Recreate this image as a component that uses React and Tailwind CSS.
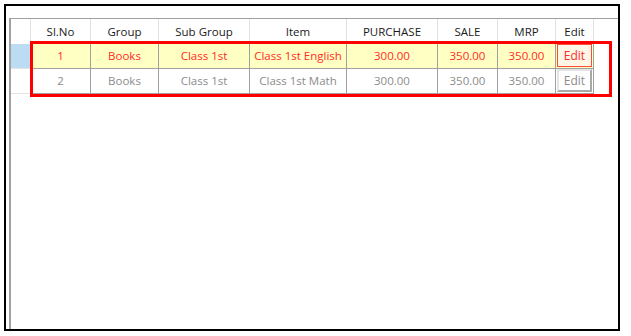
const cols = [
  { key: "sl", label: "Sl.No", w: 60 },
  { key: "group", label: "Group", w: 68 },
  { key: "sub", label: "Sub Group", w: 91 },
  { key: "item", label: "Item", w: 97 },
  { key: "purchase", label: "PURCHASE", w: 91 },
  { key: "sale", label: "SALE", w: 60 },
  { key: "mrp", label: "MRP", w: 58 },
];

const rows = [
  { sl: 1, group: "Books", sub: "Class 1st", item: "Class 1st English", purchase: "300.00", sale: "350.00", mrp: "350.00" },
  { sl: 2, group: "Books", sub: "Class 1st", item: "Class 1st Math", purchase: "300.00", sale: "350.00", mrp: "350.00" },
];

const gridCols = "grid grid-cols-[20px_60px_68px_91px_97px_91px_60px_58px_38px]";

export default function App() {
  return (
    <div
      className="w-[631px] h-[336px] bg-white p-[4px] text-[11.5px]"
      style={{ fontFamily: '"Open Sans", "Noto Sans", sans-serif' }}
    >
      <div className="relative w-[616px] h-[327px] border-2 border-black pt-[12px] pl-[3px]">
        {/* grid view */}
        <div className="h-full border-l-2 border-t border-[#a0a0a0]">
          {/* column headers */}
          <div className={`${gridCols} h-[25px] text-[#1a1a1a]`}>
            <div className="border-r border-[#e2e2e2]" />
            {cols.map((c) => (
              <div key={c.key} className="flex items-center justify-center border-r border-[#e2e2e2]">
                {c.label}
              </div>
            ))}
            <div className="flex items-center justify-center border-r border-[#e2e2e2]">Edit</div>
          </div>

          {rows.map((r, i) => {
            const selected = i === 0;
            return (
              <div
                key={r.sl}
                className={`${gridCols} h-[25px] ${selected ? "text-[#ff2a2a]" : "text-[#8c8c8c]"}`}
              >
                <div className={`border-b border-[#e4e4e4] ${selected ? "bg-[#bcdcf4]" : "bg-white"}`} />
                {cols.map((c) => (
                  <div
                    key={c.key}
                    className={`flex items-center justify-center border-r border-b border-[#a0a0a0] ${
                      selected ? "bg-[#ffffc4]" : "bg-white"
                    }`}
                  >
                    {r[c.key]}
                  </div>
                ))}
                <div
                  className={`flex items-stretch border-r border-b border-[#a0a0a0] px-[1px] pb-[1px] ${
                    selected ? "bg-[#ffffc4]" : "bg-white"
                  }`}
                >
                  {selected ? (
                    <button className="flex-1 flex items-center justify-center border border-[#ff4a3a] bg-[#fff6e6] text-[#ff2a2a] text-[12px]">
                      Edit
                    </button>
                  ) : (
                    <button className="flex-1 flex items-center justify-center border-2 border-t-[#e4e4e4] border-l-[#e4e4e4] border-r-[#a8a8a8] border-b-[#a8a8a8] bg-white text-[#8c8c8c] text-[12px]">
                      Edit
                    </button>
                  )}
                </div>
              </div>
            );
          })}
        </div>

        {/* highlight frame around the rows */}
        <div className="absolute left-[24px] top-[35px] w-[582px] h-[56px] border-[3px] border-[#ff0000]" />
      </div>
    </div>
  );
}
